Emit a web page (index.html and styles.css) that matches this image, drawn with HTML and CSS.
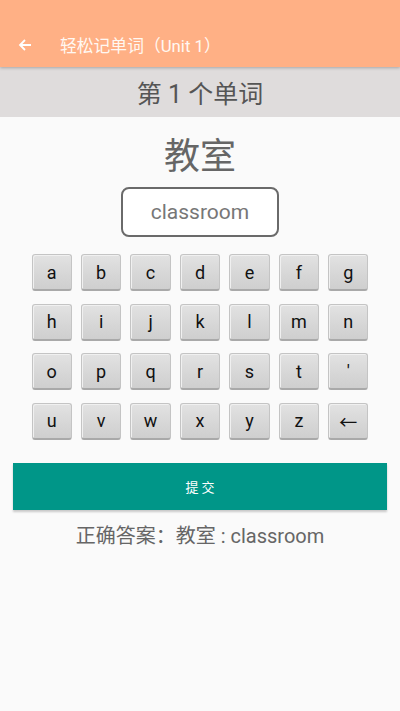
FILE: index.html
```html
<!DOCTYPE html>
<html lang="zh">
<head>
<meta charset="utf-8">
<link rel="stylesheet" href="styles.css">
</head>
<body>
<header class="appbar">
  <svg class="back" width="16" height="16" viewBox="0 0 16 16"><path d="M14 8H3M8 3L3 8l5 5" fill="none" stroke="#fff" stroke-width="1.8"/></svg>
  <span class="title">轻松记单词（Unit 1）</span>
</header>
<div class="band">第 1 个单词</div>
<main class="content">
  <div class="word">教室</div>
  <div class="answer-box">classroom</div>
  <div class="keys">
    <div class="key">a</div><div class="key">b</div><div class="key">c</div><div class="key">d</div><div class="key">e</div><div class="key">f</div><div class="key">g</div>
    <div class="key">h</div><div class="key">i</div><div class="key">j</div><div class="key">k</div><div class="key">l</div><div class="key">m</div><div class="key">n</div>
    <div class="key">o</div><div class="key">p</div><div class="key">q</div><div class="key">r</div><div class="key">s</div><div class="key">t</div><div class="key">'</div>
    <div class="key">u</div><div class="key">v</div><div class="key">w</div><div class="key">x</div><div class="key">y</div><div class="key">z</div><div class="key">←</div>
  </div>
  <button class="submit">提 交</button>
  <div class="result">正确答案：教室 : classroom</div>
</main>
</body>
</html>
```

FILE: styles.css
```css
html, body {
  margin: 0;
  padding: 0;
}
body {
  width: 400px;
  height: 711px;
  background: #fafafa;
  font-family: Roboto, "Noto Sans CJK SC", sans-serif;
  overflow: hidden;
}
.appbar {
  height: 67px;
  background: #ffb085;
  display: flex;
  align-items: center;
  padding: 22px 0 0 17px;
  box-sizing: border-box;
  box-shadow: 0 1px 3px rgba(0,0,0,0.25);
  position: relative;
  z-index: 1;
}
.back {
  display: block;
}
.title {
  margin-left: 27px;
  color: #fff8f2;
  font-size: 16.8px;
}
.band {
  height: 50px;
  background: #dfdcdc;
  color: #555;
  font-size: 25px;
  display: flex;
  align-items: center;
  justify-content: center;
}
.content {
  display: flex;
  flex-direction: column;
  align-items: center;
}
.word {
  margin-top: 17px;
  font-size: 36px;
  color: #666;
  line-height: 46px;
}
.answer-box {
  margin-top: 7px;
  width: 158px;
  height: 50px;
  box-sizing: border-box;
  border: 2px solid #6a6a6a;
  border-radius: 8px;
  background: #fff;
  color: #777;
  font-size: 21px;
  display: flex;
  align-items: center;
  justify-content: center;
}
.keys {
  margin-top: 17px;
  width: 337px;
  display: grid;
  grid-template-columns: repeat(7, 1fr);
  column-gap: 9px;
  row-gap: 12.5px;
}
.key {
  height: 37px;
  box-sizing: border-box;
  border-radius: 3px;
  background: linear-gradient(180deg, #e2e2e2 0%, #d6d6d6 60%, #cfcfcf 100%);
  border: 1px solid #c4c4c4;
  border-bottom: 2px solid #a9a9a9;
  box-shadow: inset 1px 1px 0 #f0f0f0;
  display: flex;
  align-items: center;
  justify-content: center;
  font-size: 18px;
  color: #111;
}
.submit {
  margin-top: 23.5px;
  width: 374px;
  height: 47px;
  border: none;
  background: #009688;
  color: #fff;
  font-family: "Noto Sans CJK SC", sans-serif;
  font-size: 13px;
  box-shadow: 0 2px 2px rgba(0,0,0,0.2);
}
.result {
  margin-top: 10px;
  font-size: 20px;
  color: #666;
}
```
